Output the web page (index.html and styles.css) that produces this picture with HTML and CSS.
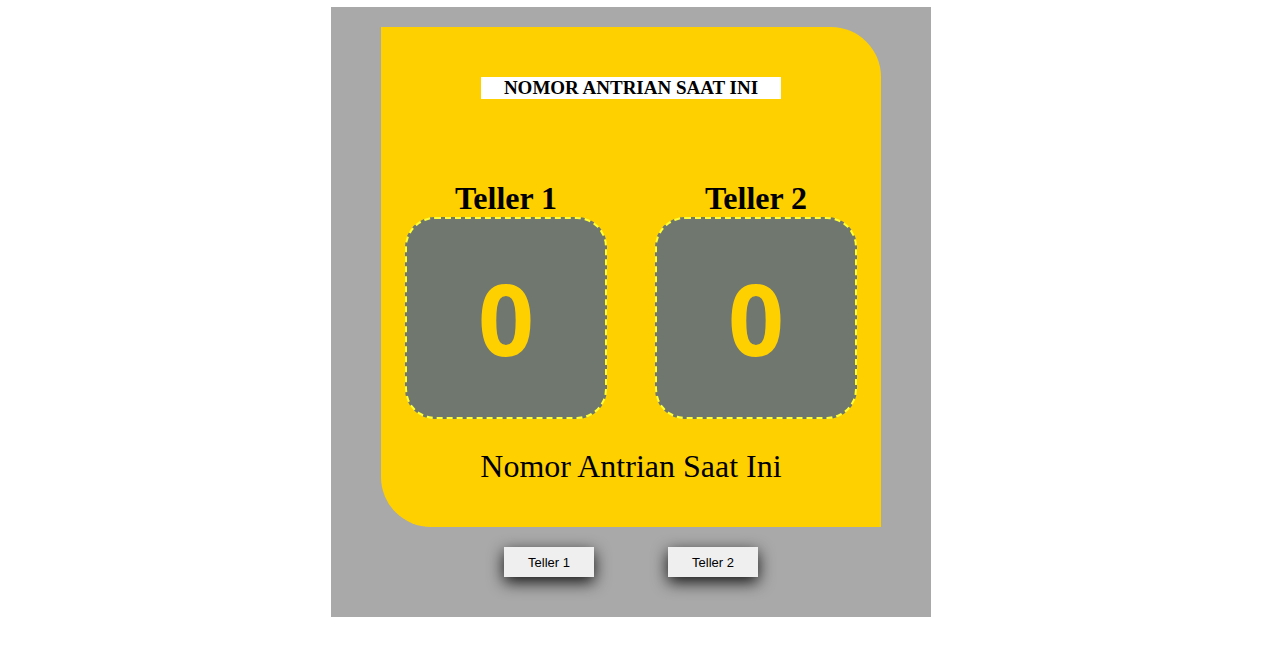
FILE: index.html
```html
<!DOCTYPE html>
<html lang="id">
<head>
<meta charset="utf-8">
<title>Antrian</title>
<link rel="stylesheet" href="styles.css">
</head>
<body>
<div class="frame">
  <div class="card">
    <div class="title">NOMOR ANTRIAN SAAT INI</div>
    <div class="tellers">
      <div class="teller">
        <h2 class="teller-name">Teller 1</h2>
        <div class="number-box"><span class="number">0</span></div>
      </div>
      <div class="teller">
        <h2 class="teller-name">Teller 2</h2>
        <div class="number-box"><span class="number">0</span></div>
      </div>
    </div>
    <div class="caption">Nomor Antrian Saat Ini</div>
  </div>
  <div class="buttons">
    <button class="btn">Teller 1</button>
    <button class="btn">Teller 2</button>
  </div>
</div>
</body>
</html>
```
FILE: styles.css
```css
html, body {
  margin: 0;
  padding: 0;
  background: #ffffff;
}
body {
  padding-top: 7px;
  font-family: "Liberation Serif", "Times New Roman", serif;
}
.frame {
  width: 600px;
  height: 610px;
  margin-left: 331px;
  background: #a9a9a9;
  padding-top: 20px;
  box-sizing: border-box;
}
.card {
  width: 500px;
  height: 500px;
  margin: 0 auto;
  background: #ffd000;
  border-radius: 0 50px 0 50px;
  padding-top: 50px;
  box-sizing: border-box;
}
.title {
  width: 300px;
  height: 22px;
  margin: 0 auto;
  background: #ffffff;
  text-align: center;
  font-weight: bold;
  font-size: 19px;
  line-height: 22px;
  color: #000;
}
.tellers {
  display: flex;
  justify-content: space-around;
  margin-top: 80px;
}
.teller {
  display: flex;
  flex-direction: column;
  align-items: center;
}
.teller-name {
  margin: 0;
  font-size: 32px;
  line-height: 38px;
  font-weight: bold;
  color: #000;
}
.number-box {
  width: 198px;
  height: 198px;
  background: #6f776f;
  border: 2px dashed #ffff33;
  border-radius: 30px;
  display: flex;
  align-items: center;
  justify-content: center;
}
.number {
  font-family: "Open Sans", "DejaVu Sans", sans-serif;
  font-weight: 700;
  font-size: 98px;
  color: #ffd000;
  line-height: 1;
}
.caption {
  margin-top: 27px;
  text-align: center;
  font-size: 32px;
  line-height: 40px;
  color: #000;
}
.buttons {
  display: flex;
  justify-content: center;
  gap: 74px;
  margin-top: 20px;
}
.btn {
  width: 90px;
  height: 30px;
  border: none;
  background: #efefef;
  font-family: "Liberation Sans", Arial, sans-serif;
  font-size: 13px;
  color: #000;
  padding: 0;
  box-shadow: 0 5px 16px rgba(0, 0, 0, 0.9);
}
```
